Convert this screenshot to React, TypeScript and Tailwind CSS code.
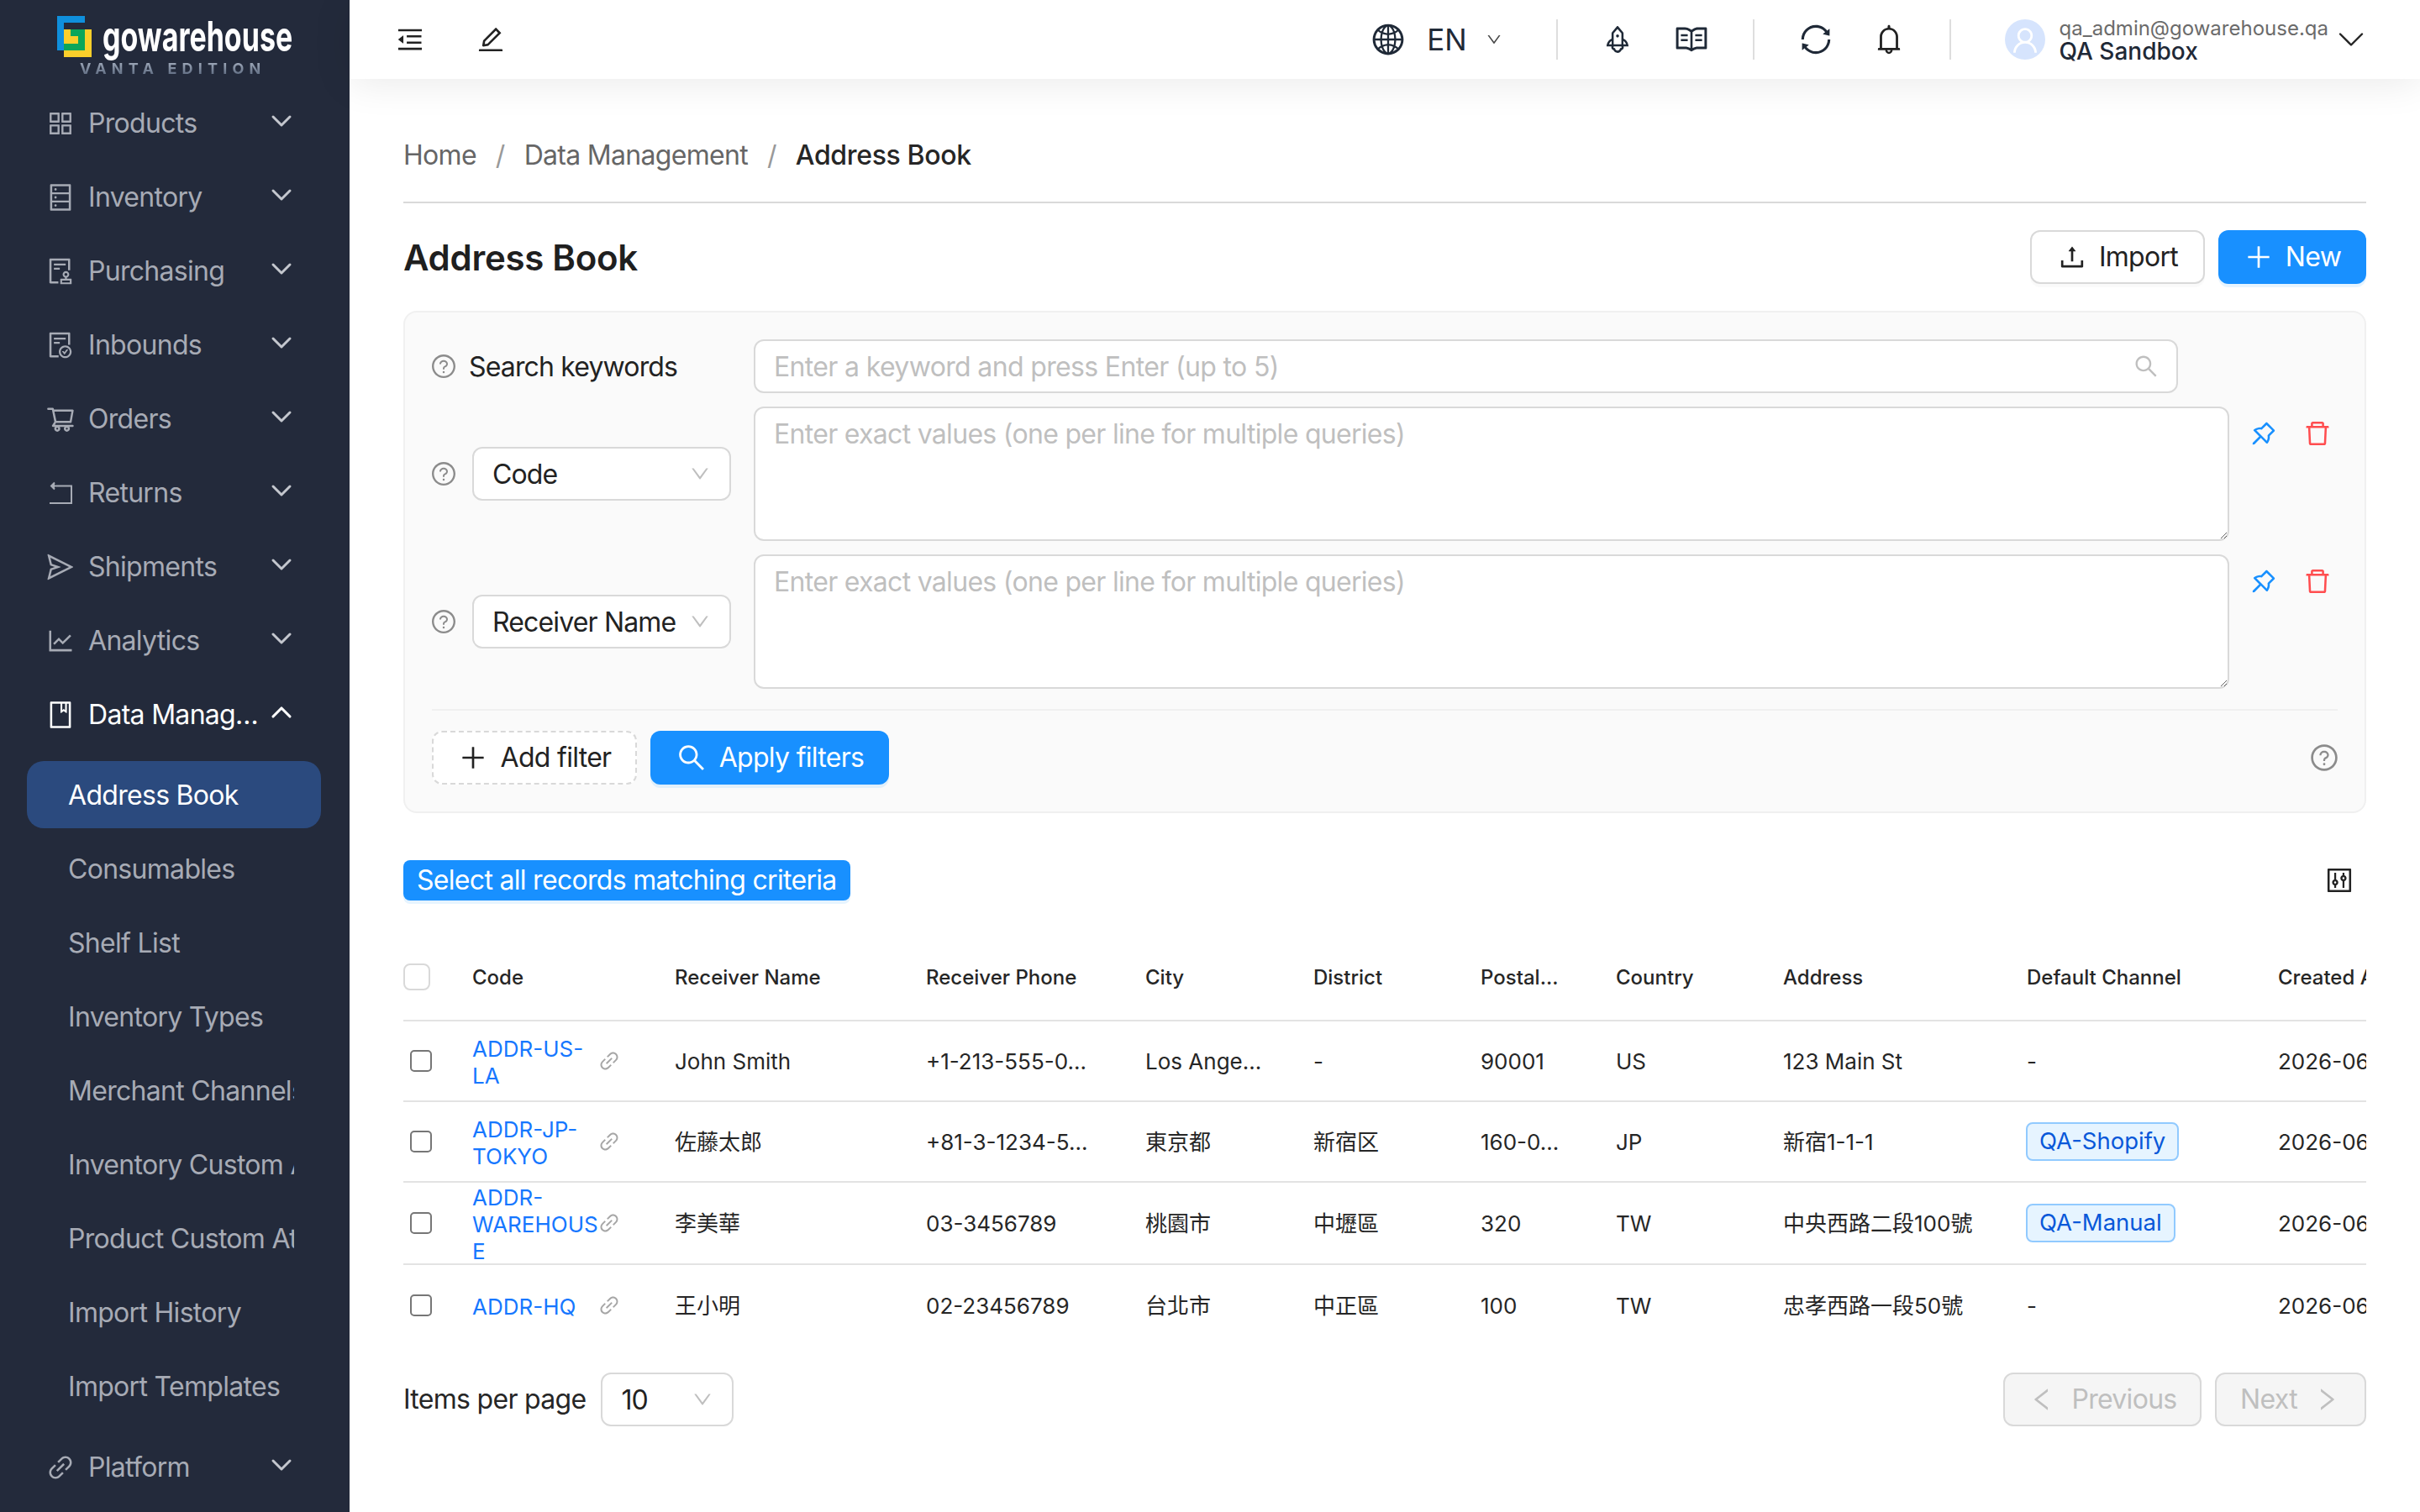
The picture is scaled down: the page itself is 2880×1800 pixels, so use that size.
import type { ComponentType, ReactNode } from "react";
import { ChevronDown, ChevronUp } from "lucide-react";
import {
  AiOutlineAppstore,
  AiOutlineAudit,
  AiOutlineBell,
  AiOutlineBook,
  AiOutlineControl,
  AiOutlineDatabase,
  AiOutlineDelete,
  AiOutlineDown,
  AiOutlineEdit,
  AiOutlineFileDone,
  AiOutlineGlobal,
  AiOutlineLeft,
  AiOutlineLineChart,
  AiOutlineLink,
  AiOutlineMenuFold,
  AiOutlinePlus,
  AiOutlinePushpin,
  AiOutlineQuestionCircle,
  AiOutlineRead,
  AiOutlineRight,
  AiOutlineRocket,
  AiOutlineSearch,
  AiOutlineSend,
  AiOutlineShoppingCart,
  AiOutlineSync,
  AiOutlineUpload,
  AiOutlineUser,
} from "react-icons/ai";

type IconType = ComponentType<{ size?: number; className?: string }>;

function ReturnsIcon({ size = 32, className }: { size?: number; className?: string }) {
  return (
    <svg width={size} height={size} viewBox="0 0 36 36" fill="none" stroke="currentColor" strokeWidth="2" className={className}>
      <path d="M9 9.5H31V30H5" />
      <path d="M11 5.5L7 9.5L11 13.5" fill="currentColor" />
    </svg>
  );
}

function LogoMark() {
  return (
    <svg width="41" height="49" viewBox="0 0 41 49" className="shrink-0">
      <path d="M0 0H33V8H8V41H0Z" fill="#0f8fdc" />
      <rect x="8" y="16" width="33" height="33" fill="#fbcf2b" />
      <path d="M16 16H33V41H8V33H25V24H16Z" fill="#0ba65a" />
    </svg>
  );
}

const navTop: { label: string; icon: IconType }[] = [
  { label: "Products", icon: AiOutlineAppstore },
  { label: "Inventory", icon: AiOutlineDatabase },
  { label: "Purchasing", icon: AiOutlineAudit },
  { label: "Inbounds", icon: AiOutlineFileDone },
  { label: "Orders", icon: AiOutlineShoppingCart },
  { label: "Returns", icon: ReturnsIcon },
  { label: "Shipments", icon: AiOutlineSend },
  { label: "Analytics", icon: AiOutlineLineChart },
];

const subItems = [
  "Consumables",
  "Shelf List",
  "Inventory Types",
  "Merchant Channels",
  "Inventory Custom Attributes",
  "Product Custom Attributes",
  "Import History",
  "Import Templates",
];

function NavItem({ label, icon: Icon, open }: { label: string; icon: IconType; open?: boolean }) {
  return (
    <div className={`flex h-[80px] items-center pl-[22px] pr-[27px] pt-[2px] ${open ? "text-white" : "text-[#a7abb5]"}`}>
      <Icon size={36} className="shrink-0" />
      <span className="ml-[15px] min-w-0 flex-1 truncate">{label}</span>
      <span className="w-[40px] shrink-0 -translate-y-[3px]">
        {open ? (
          <ChevronUp size={40} strokeWidth={1.9} className="text-white" />
        ) : (
          <ChevronDown size={40} strokeWidth={1.8} className="text-[#c4c7ce]" />
        )}
      </span>
    </div>
  );
}

function Sidebar() {
  return (
    <aside className="h-full w-[416px] shrink-0 overflow-hidden bg-[#232a3b] text-[32px]">
      <div className="h-[106px] pl-[68px] pt-[19px]">
        <div className="flex h-[49px] items-start">
          <LogoMark />
          <span className="ml-[13px] mt-[-4px] origin-left scale-x-[0.68] text-[50px] font-bold leading-[56px] tracking-normal whitespace-nowrap text-white">
            gowarehouse
          </span>
        </div>
        <div className="ml-[27px] mt-[5px] bg-gradient-to-b from-[#a3adbd] to-[#59667c] bg-clip-text text-[18px] font-bold leading-[18px] tracking-[6.2px] whitespace-nowrap text-transparent">
          VANTA EDITION
        </div>
      </div>
      <nav className="mx-[32px] flex w-[350px] flex-col gap-[8px]">
        {navTop.map((n) => (
          <NavItem key={n.label} label={n.label} icon={n.icon} />
        ))}
        <NavItem label="Data Management" icon={AiOutlineBook} open />
        <div className="mt-[8px] flex h-[80px] items-center rounded-[20px] bg-[#2b4a7e] pl-[49px] pt-[2px] text-white">Address Book</div>
        {subItems.map((s) => (
          <div key={s} className="flex h-[80px] items-center overflow-hidden whitespace-nowrap pl-[49px] pt-[2px] text-[#a7abb5]">
            <span className="w-[269px] overflow-hidden">{s}</span>
          </div>
        ))}
        <div className="mt-[8px]">
          <NavItem label="Platform" icon={AiOutlineLink} />
        </div>
      </nav>
    </aside>
  );
}

function VDivider() {
  return <span className="h-[48px] w-[2px] bg-[#dedede]" />;
}

function TopBar() {
  return (
    <header className="relative flex h-[94px] shrink-0 items-center bg-white pl-[54px] pr-[56px] tracking-normal text-[#1f2937] shadow-[0_4px_48px_rgba(0,0,0,0.09)]">
      <AiOutlineMenuFold size={36} className="text-[#222]" />
      <AiOutlineEdit size={36} className="ml-[60px] text-[#222]" />
      <div className="ml-auto flex items-center">
        <AiOutlineGlobal size={42} />
        <span className="ml-[25px] text-[35px] leading-none">EN</span>
        <AiOutlineDown size={20} className="ml-[22px] mr-[64px] text-[#444]" />
        <VDivider />
        <AiOutlineRocket size={38} className="ml-[52px]" />
        <AiOutlineRead size={42} className="ml-[48px] mr-[52px]" />
        <VDivider />
        <AiOutlineSync size={42} className="ml-[52px]" />
        <AiOutlineBell size={40} className="ml-[46px] mr-[52px] text-[#222]" />
        <VDivider />
        <span className="ml-[64px] flex h-[48px] w-[48px] items-end justify-center overflow-hidden rounded-full bg-[#d6e4fd] text-white">
          <AiOutlineUser size={38} className="mb-[4px]" />
        </span>
        <div className="ml-[17px] flex flex-col">
          <span className="text-[24px] leading-[28px] text-[#6b6b6b]">qa_admin@gowarehouse.qa</span>
          <span className="text-[28px] font-medium leading-[26px]">QA Sandbox</span>
        </div>
        <ChevronDown size={52} strokeWidth={1.1} className="ml-[1px] text-[#222]" />
      </div>
    </header>
  );
}

function Btn({ children, className }: { children: ReactNode; className: string }) {
  return <button className={`flex h-[64px] items-center justify-center rounded-[12px] ${className}`}>{children}</button>;
}

function SelectBox({ value, className }: { value: string; className: string }) {
  return (
    <div className={`flex h-[64px] items-center justify-between rounded-[12px] border-2 border-[#d9d9d9] bg-white pl-[22px] pr-[22px] ${className}`}>
      <span className="whitespace-nowrap pt-[2px] tracking-[-0.85px] text-[#222]">{value}</span>
      <AiOutlineDown size={26} className="shrink-0 text-[#bfbfbf]" />
    </div>
  );
}

function FilterRow({ field }: { field: string }) {
  return (
    <div className="flex h-[160px] items-center">
      <div className="flex w-[383px] shrink-0 items-center">
        <AiOutlineQuestionCircle size={32} className="-mx-[2px] text-[#8c8c8c]" />
        <SelectBox value={field} className="ml-[20px] w-[308px]" />
      </div>
      <textarea
        className="h-[160px] w-[1756px] shrink-0 rounded-[12px] border-2 border-[#d9d9d9] bg-white px-[22px] pt-[11px] text-[32px] leading-[40px] tracking-[-0.7px] outline-none placeholder:text-[#bfbfbf]"
        placeholder="Enter exact values (one per line for multiple queries)"
      />
      <div className="ml-[9px] flex shrink-0 self-start">
        <span className="flex h-[64px] w-[64px] items-center justify-center text-[#1890ff]">
          <AiOutlinePushpin size={36} />
        </span>
        <span className="flex h-[64px] w-[64px] items-center justify-center text-[#ff4d4f]">
          <AiOutlineDelete size={36} />
        </span>
      </div>
    </div>
  );
}

function FilterPanel() {
  return (
    <section className="mt-[32px] rounded-[16px] border-2 border-[#f0f0f0] bg-[#fafafa] p-[32px]">
      <div className="flex h-[64px] items-center">
        <div className="flex w-[383px] shrink-0 items-center">
          <AiOutlineQuestionCircle size={32} className="-mx-[2px] text-[#8c8c8c]" />
          <span className="ml-[16px] pt-[2px] tracking-[-0.85px] text-[#222]">Search keywords</span>
        </div>
        <div className="flex h-[64px] w-[1695px] items-center rounded-[12px] border-2 border-[#d9d9d9] bg-white pl-[22px] pr-[20px]">
          <input
            className="min-w-0 flex-1 bg-transparent pt-[2px] text-[32px] tracking-[-0.65px] outline-none placeholder:text-[#bfbfbf]"
            placeholder="Enter a keyword and press Enter (up to 5)"
          />
          <AiOutlineSearch size={32} className="text-[#bfbfbf]" />
        </div>
      </div>
      <div className="mt-[16px] flex flex-col gap-[16px]">
        <FilterRow field="Code" />
        <FilterRow field="Receiver Name" />
      </div>
      <div className="mt-[24px] flex items-center border-t-2 border-[#f0f0f0] pt-[24px]">
        <Btn className="w-[244px] gap-[15px] border-2 border-dashed border-[#d9d9d9] bg-white text-[#222]">
          <AiOutlinePlus size={36} />
          Add filter
        </Btn>
        <Btn className="ml-[16px] w-[284px] gap-[14px] bg-[#1890ff] text-white shadow-[0_4px_0_rgba(5,145,255,0.1)]">
          <AiOutlineSearch size={38} />
          Apply filters
        </Btn>
        <AiOutlineQuestionCircle size={36} className="-mr-[2px] ml-auto text-[#8c8c8c]" />
      </div>
    </section>
  );
}

const columns = [
  { label: "Code", w: "w-[241px]" },
  { label: "Receiver Name", w: "w-[299px]" },
  { label: "Receiver Phone", w: "w-[261px]" },
  { label: "City", w: "w-[200px]" },
  { label: "District", w: "w-[199px]" },
  { label: "Postal...", w: "w-[161px]" },
  { label: "Country", w: "w-[199px]" },
  { label: "Address", w: "w-[290px]" },
  { label: "Default Channel", w: "w-[299px]" },
  { label: "Created At", w: "w-[300px]" },
];

const rows = [
  { code: ["ADDR-US-", "LA"], name: "John Smith", phone: "+1-213-555-0...", city: "Los Ange...", district: "-", postal: "90001", country: "US", address: "123 Main St", channel: "", created: "2026-06-01" },
  { code: ["ADDR-JP-", "TOKYO"], name: "佐藤太郎", phone: "+81-3-1234-5...", city: "東京都", district: "新宿区", postal: "160-0...", country: "JP", address: "新宿1-1-1", channel: "QA-Shopify", created: "2026-06-01" },
  { code: ["ADDR-", "WAREHOUS", "E"], name: "李美華", phone: "03-3456789", city: "桃園市", district: "中壢區", postal: "320", country: "TW", address: "中央西路二段100號", channel: "QA-Manual", created: "2026-06-01" },
  { code: ["ADDR-HQ"], name: "王小明", phone: "02-23456789", city: "台北市", district: "中正區", postal: "100", country: "TW", address: "忠孝西路一段50號", channel: "", created: "2026-06-01" },
];

function AddressTable() {
  const cell = "px-[16px] whitespace-nowrap";
  return (
    <div className="mt-[40px] w-[2336px] overflow-hidden">
      <table className="w-[2515px] table-fixed border-separate border-spacing-0 text-[26px] tracking-normal text-[#262626]">
        <thead>
          <tr>
            <th className="h-[104px] w-[66px] border-b-2 border-[#e3e3e3] text-left">
              <span className="block h-[32px] w-[32px] rounded-[8px] border-2 border-[#d9d9d9] bg-white" />
            </th>
            {columns.map((c) => (
              <th key={c.label} className={`${c.w} h-[104px] border-b-2 border-[#e3e3e3] px-[16px] pt-[2px] text-left text-[24px] font-medium whitespace-nowrap`}>
                {c.label}
              </th>
            ))}
          </tr>
        </thead>
        <tbody>
          {rows.map((r, i) => {
            const line = i < rows.length - 1 ? "border-b-2 border-[#e3e3e3]" : "";
            return (
              <tr key={r.name}>
                <td className={`h-[96px] pl-[8px] ${line}`}>
                  <input type="checkbox" className="block h-[26px] w-[26px] appearance-none rounded-[5px] border-2 border-[#767676] bg-white" />
                </td>
                <td className={`h-[96px] pl-[16px] ${line}`}>
                  <div className="flex items-center">
                    <span className="w-[148px] shrink-0 translate-y-[2px] text-[26px] leading-[32px] text-[#1677ff]">
                      {r.code.map((part) => (
                        <span key={part} className="block">
                          {part}
                        </span>
                      ))}
                    </span>
                    <AiOutlineLink size={28} className="ml-[1px] text-[#a6a6a6]" />
                  </div>
                </td>
                <td className={`${cell} ${line}`}>{r.name}</td>
                <td className={`${cell} ${line}`}>{r.phone}</td>
                <td className={`${cell} ${line}`}>{r.city}</td>
                <td className={`${cell} ${line}`}>{r.district}</td>
                <td className={`${cell} ${line}`}>{r.postal}</td>
                <td className={`${cell} ${line}`}>{r.country}</td>
                <td className={`${cell} ${line}`}>{r.address}</td>
                <td className={`${cell} ${line}`}>
                  {r.channel ? (
                    <span className="-ml-[1px] inline-flex h-[46px] items-center rounded-[8px] border-2 border-[#91caff] bg-[#e6f4ff] px-[14px] text-[27.5px] text-[#0958d9]">
                      {r.channel}
                    </span>
                  ) : (
                    "-"
                  )}
                </td>
                <td className={`${cell} ${line}`}>{r.created}</td>
              </tr>
            );
          })}
        </tbody>
      </table>
    </div>
  );
}

export default function App() {
  return (
    <div className="flex h-screen w-screen overflow-hidden bg-white font-['Inter','Noto_Sans_CJK_TC',sans-serif] text-[32px] tracking-[-0.7px]">
      <Sidebar />
      <div className="flex min-w-0 flex-1 flex-col">
        <TopBar />
        <main className="px-[64px]">
          {/* breadcrumb */}
          <div className="flex h-[148px] items-center gap-[23px] border-b-2 border-[#d9d9d9] pt-[36px] text-[#666]">
            <span>Home</span>
            <span className="text-[#999]">/</span>
            <span>Data Management</span>
            <span className="text-[#999]">/</span>
            <span className="font-medium tracking-[-0.35px] text-[#262626]">Address Book</span>
          </div>

          <div className="mt-[32px] flex items-center justify-between">
            <h1 className="text-[42px] font-semibold tracking-[-0.3px] text-[#1f1f1f]">Address Book</h1>
            <div className="flex gap-[16px]">
              <Btn className="w-[208px] gap-[14px] border-2 border-[#d9d9d9] bg-white text-[#222] shadow-[0_4px_0_rgba(0,0,0,0.02)]">
                <AiOutlineUpload size={36} />
                Import
              </Btn>
              <Btn className="w-[176px] gap-[14px] bg-[#1890ff] text-white shadow-[0_4px_0_rgba(5,145,255,0.1)]">
                <AiOutlinePlus size={36} />
                New
              </Btn>
            </div>
          </div>

          <FilterPanel />

          <div className="mt-[56px] flex items-center justify-between">
            <button className="h-[48px] rounded-[8px] bg-[#1890ff] px-[16px] text-[32px] whitespace-nowrap text-white shadow-[0_4px_0_rgba(5,145,255,0.1)]">
              Select all records matching criteria
            </button>
            <AiOutlineControl size={36} className="mr-[14px] text-[#222]" />
          </div>

          <AddressTable />

          <div className="mt-[32px] flex items-center justify-between">
            <div className="flex items-center">
              <span className="text-[#262626]">Items per page</span>
              <SelectBox value="10" className="ml-[18px] w-[158px]" />
            </div>
            <div className="flex gap-[16px] text-[#bfbfbf]">
              <Btn className="w-[236px] gap-[18px] border-2 border-[#d9d9d9] bg-[#f5f5f5]">
                <AiOutlineLeft size={34} />
                Previous
              </Btn>
              <Btn className="w-[180px] gap-[18px] border-2 border-[#d9d9d9] bg-[#f5f5f5]">
                Next
                <AiOutlineRight size={34} />
              </Btn>
            </div>
          </div>
        </main>
      </div>
    </div>
  );
}
